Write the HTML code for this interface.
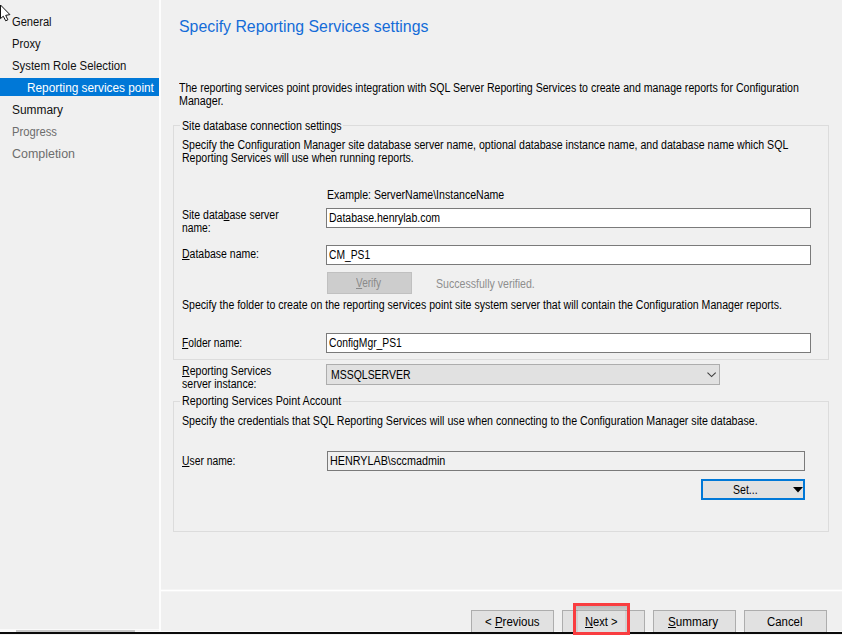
<!DOCTYPE html>
<html><head><meta charset="utf-8"><title>Specify Reporting Services settings</title>
<style>
html,body{margin:0;padding:0;}
body{width:842px;height:635px;position:relative;overflow:hidden;background:#f0f0f0;font-family:"Liberation Sans",sans-serif;font-size:11px;color:#000;}
.t{position:absolute;white-space:nowrap;}
.r{position:absolute;box-sizing:border-box;}
.box{border:1px solid #dcdcdc;}
.inp{border:1px solid #7a7a7a;background:#fff;}
.btn{border:1px solid #adadad;background:#e1e1e1;}
.lbg{background:#f0f0f0;height:3px;}
u{text-decoration:underline;text-underline-offset:1px;}
</style></head><body>
<!-- sidebar -->
<div class="r" style="left:159px;top:0;width:2px;height:631px;background:#fdfdfd;"></div>
<div class="r" style="left:0;top:78px;width:159px;height:18px;background:#0078d7;"></div>
<!-- cursor -->
<svg style="position:absolute;left:0;top:0" width="14" height="24" viewBox="0 0 14 24"><path d="M0.5 5 L0.5 18.6 L3.3 16.2 L5.7 20.8 L7.9 19.8 L5.7 15.4 L9.9 14.6 Z" fill="#fff" stroke="#111" stroke-width="1" stroke-linejoin="miter"/></svg>

<!-- group 1 -->
<div class="r box" style="left:173px;top:125px;width:656px;height:235px;"></div>
<div class="r lbg" style="left:180px;top:124px;width:163px;"></div>
<div class="r inp" style="left:326px;top:208px;width:485px;height:20px;"></div>
<div class="r inp" style="left:326px;top:245px;width:485px;height:20px;"></div>
<div class="r btn" style="left:327px;top:272px;width:85px;height:22px;background:#cdcdcd;border-color:#c0c0c0;"></div>
<div class="r inp" style="left:326px;top:333px;width:485px;height:20px;"></div>

<div class="r btn" style="left:326px;top:364px;width:394px;height:21px;"></div>
<svg style="position:absolute;left:706.5px;top:372.3px" width="10" height="6" viewBox="0 0 10 6"><path d="M0.5 0.6 L4.6 4.6 L8.7 0.6" fill="none" stroke="#3c3c3c" stroke-width="1.1"/></svg>

<!-- group 2 -->
<div class="r box" style="left:173px;top:401px;width:656px;height:131px;"></div>
<div class="r lbg" style="left:180px;top:400px;width:163px;"></div>
<div class="r inp" style="left:327px;top:451px;width:478px;height:20px;background:#f0f0f0;"></div>
<div class="r btn" style="left:701px;top:479px;width:104px;height:21px;border:2px solid #0078d7;"></div>
<svg style="position:absolute;left:793px;top:487px" width="10" height="6" viewBox="0 0 10 6"><path d="M0 0 L10 0 L5 5.5 Z" fill="#000"/></svg>

<!-- footer -->
<div class="r" style="left:161px;top:590px;width:681px;height:1px;background:#fff;"></div><div class="r" style="left:161px;top:589px;width:681px;height:1px;background:#f5f5f5;"></div><div class="r" style="left:161px;top:591px;width:681px;height:1px;background:#f5f5f5;"></div>
<div class="r" style="left:135px;top:631px;width:707px;height:1px;background:#fbfbfb;"></div>
<div class="r btn" style="left:471px;top:610px;width:83px;height:24px;"></div>
<div class="r btn" style="left:562px;top:610px;width:83px;height:24px;"></div>
<div class="r btn" style="left:653px;top:610px;width:83px;height:24px;"></div>
<div class="r btn" style="left:744px;top:610px;width:83px;height:24px;"></div>
<div class="r" style="left:0;top:629px;width:159px;height:1px;background:#fafafa;"></div>
<div class="r" style="left:0;top:630px;width:16px;height:2px;background:#fafafa;"></div>
<div class="r" style="left:16px;top:630px;width:119px;height:2px;background:#c8c8c8;"></div>
<div class="r" style="left:0;top:632px;width:842px;height:2px;background:#0a0a0a;"></div>
<div class="r" style="left:0;top:634px;width:842px;height:1px;background:#f4f4f4;"></div>
<div class="r" style="left:576px;top:606px;width:51px;height:4px;background:linear-gradient(#bcbcbc,#c9c9c9);"></div>
<div class="r" style="left:576px;top:610px;width:2px;height:22px;background:rgba(0,0,0,0.07);"></div>
<div class="r" style="left:625px;top:610px;width:2px;height:22px;background:rgba(0,0,0,0.07);"></div>
<div class="r" style="left:573px;top:603px;width:57px;height:32px;border:3px solid #f93d40;"></div>
<div class="t" id="n1" style="left:12.0px;top:15px;font-size:12px;line-height:14px;color:#111;transform-origin:0 0;transform:scaleX(0.9273);">General</div>
<div class="t" id="n2" style="left:12.0px;top:37px;font-size:12px;line-height:14px;color:#111;transform-origin:0 0;transform:scaleX(0.9320);">Proxy</div>
<div class="t" id="n3" style="left:12.0px;top:59px;font-size:12px;line-height:14px;color:#111;transform-origin:0 0;transform:scaleX(0.9475);">System Role Selection</div>
<div class="t" id="n4" style="left:27.0px;top:81px;font-size:12px;line-height:14px;color:#fff;transform-origin:0 0;transform:scaleX(0.9858);">Reporting services point</div>
<div class="t" id="n5" style="left:12.0px;top:103px;font-size:12px;line-height:14px;color:#111;transform-origin:0 0;transform:scaleX(0.9933);">Summary</div>
<div class="t" id="n6" style="left:12.0px;top:125px;font-size:12px;line-height:14px;color:#6d6d6d;transform-origin:0 0;transform:scaleX(0.9369);">Progress</div>
<div class="t" id="n7" style="left:12.0px;top:147px;font-size:12px;line-height:14px;color:#6d6d6d;transform-origin:0 0;transform:scaleX(1.0378);">Completion</div>
<div class="t" id="title" style="left:179.3px;top:16px;font-size:16.5px;line-height:21px;color:#146cd8;transform-origin:0 0;transform:scaleX(0.9609);">Specify Reporting Services settings</div>
<div class="t" id="i1" style="left:179.4px;top:81px;font-size:12px;line-height:14px;color:#000;transform-origin:0 0;transform:scaleX(0.8805);">The reporting services point provides integration with SQL Server Reporting Services to create and manage reports for Configuration</div>
<div class="t" id="i2" style="left:179.4px;top:94px;font-size:12px;line-height:14px;color:#000;transform-origin:0 0;transform:scaleX(0.8912);">Manager.</div>
<div class="t" id="g1l" style="left:182.0px;top:119px;font-size:12px;line-height:14px;color:#000;transform-origin:0 0;transform:scaleX(0.8898);">Site database connection settings</div>
<div class="t" id="g1a" style="left:182.0px;top:138px;font-size:12px;line-height:14px;color:#000;transform-origin:0 0;transform:scaleX(0.8833);">Specify the Configuration Manager site database server name, optional database instance name, and database name which SQL</div>
<div class="t" id="g1b" style="left:182.0px;top:151px;font-size:12px;line-height:14px;color:#000;transform-origin:0 0;transform:scaleX(0.8798);">Reporting Services will use when running reports.</div>
<div class="t" id="ex" style="left:326.8px;top:188px;font-size:12px;line-height:14px;color:#000;transform-origin:0 0;transform:scaleX(0.8797);">Example: ServerName\InstanceName</div>
<div class="t" id="l1a" style="left:182.0px;top:208px;font-size:12px;line-height:14px;color:#000;transform-origin:0 0;transform:scaleX(0.8783);">Site data<u>b</u>ase server</div>
<div class="t" id="l1b" style="left:182.0px;top:221px;font-size:12px;line-height:14px;color:#000;transform-origin:0 0;transform:scaleX(0.8573);">name:</div>
<div class="t" id="v1" style="left:329.3px;top:211px;font-size:12px;line-height:14px;color:#000;transform-origin:0 0;transform:scaleX(0.8765);">Database.henrylab.com</div>
<div class="t" id="l2" style="left:182.0px;top:247px;font-size:12px;line-height:14px;color:#000;transform-origin:0 0;transform:scaleX(0.8744);"><u>D</u>atabase name:</div>
<div class="t" id="v2" style="left:328.9px;top:248px;font-size:12px;line-height:14px;color:#000;transform-origin:0 0;transform:scaleX(0.8557);">CM_PS1</div>
<div class="t" id="vf" style="left:356.3px;top:276px;font-size:12px;line-height:14px;color:#8a8a8a;transform-origin:0 0;transform:scaleX(0.8362);"><u>V</u>erify</div>
<div class="t" id="sv" style="left:436.2px;top:277px;font-size:12px;line-height:14px;color:#8e8e8e;transform-origin:0 0;transform:scaleX(0.8818);">Successfully verified.</div>
<div class="t" id="g1c" style="left:182.0px;top:298px;font-size:12px;line-height:14px;color:#000;transform-origin:0 0;transform:scaleX(0.8802);">Specify the folder to create on the reporting services point site system server that will contain the Configuration Manager reports.</div>
<div class="t" id="l3" style="left:182.0px;top:336px;font-size:12px;line-height:14px;color:#000;transform-origin:0 0;transform:scaleX(0.8513);"><u>F</u>older name:</div>
<div class="t" id="v3" style="left:329.0px;top:336px;font-size:12px;line-height:14px;color:#000;transform-origin:0 0;transform:scaleX(0.8593);">ConfigMgr_PS1</div>
<div class="t" id="l4a" style="left:182.0px;top:364px;font-size:12px;line-height:14px;color:#000;transform-origin:0 0;transform:scaleX(0.8817);"><u>R</u>eporting Services</div>
<div class="t" id="l4b" style="left:182.0px;top:377px;font-size:12px;line-height:14px;color:#000;transform-origin:0 0;transform:scaleX(0.8795);">server instance:</div>
<div class="t" id="v4" style="left:330.6px;top:368px;font-size:12px;line-height:14px;color:#000;transform-origin:0 0;transform:scaleX(0.8721);">MSSQLSERVER</div>
<div class="t" id="g2l" style="left:182.0px;top:394px;font-size:12px;line-height:14px;color:#000;transform-origin:0 0;transform:scaleX(0.8944);">Reporting Services Point Account</div>
<div class="t" id="g2a" style="left:182.0px;top:414px;font-size:12px;line-height:14px;color:#000;transform-origin:0 0;transform:scaleX(0.8875);">Specify the credentials that SQL Reporting Services will use when connecting to the Configuration Manager site database.</div>
<div class="t" id="l5" style="left:182.0px;top:454px;font-size:12px;line-height:14px;color:#000;transform-origin:0 0;transform:scaleX(0.8625);"><u>U</u>ser name:</div>
<div class="t" id="v5" style="left:330.3px;top:454px;font-size:12px;line-height:14px;color:#000;transform-origin:0 0;transform:scaleX(0.8974);">HENRYLAB\sccmadmin</div>
<div class="t" id="set" style="left:733.0px;top:483px;font-size:12px;line-height:14px;color:#000;transform-origin:0 0;transform:scaleX(0.8781);">Set...</div>
<div class="t" id="b1" style="left:485.0px;top:615px;font-size:12px;line-height:14px;color:#000;transform-origin:0 0;transform:scaleX(0.9571);">&lt; <u>P</u>revious</div>
<div class="t" id="b2" style="left:585.4px;top:615px;font-size:12px;line-height:14px;color:#000;transform-origin:0 0;transform:scaleX(0.9306);"><u>N</u>ext &gt;</div>
<div class="t" id="b3" style="left:668.0px;top:615px;font-size:12px;line-height:14px;color:#000;transform-origin:0 0;transform:scaleX(0.9735);"><u>S</u>ummary</div>
<div class="t" id="b4" style="left:767.0px;top:615px;font-size:12px;line-height:14px;color:#000;transform-origin:0 0;transform:scaleX(0.9502);">Cancel</div>
</body></html>
